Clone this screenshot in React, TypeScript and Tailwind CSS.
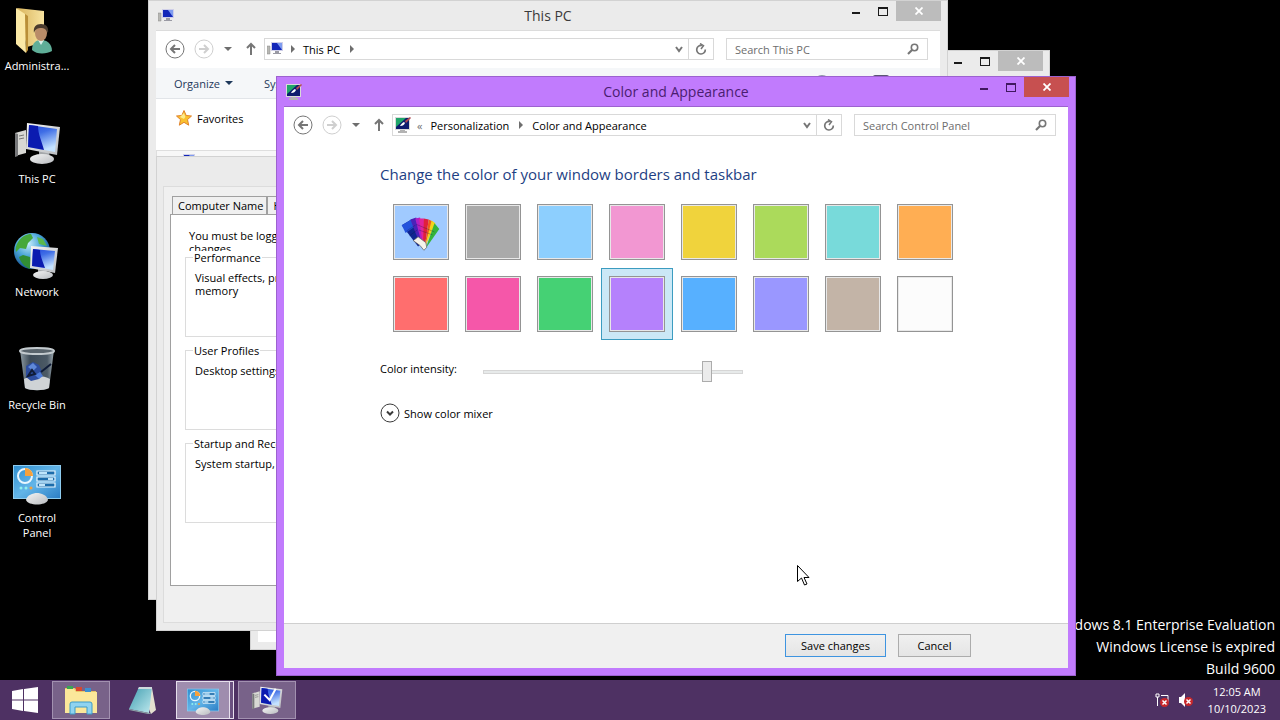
import { useState, type ReactNode } from "react";
import clsx from "clsx";

// Gradients shared by all of the icons
const IconDefs = () => (
    <svg width="0" height="0" className="absolute" aria-hidden="true">
        <defs>
            <linearGradient id="screen" x1="0" y1="0" x2="0.4" y2="1">
                <stop offset="0" stopColor="#2448dc"/>
                <stop offset="0.4" stopColor="#3f6ee6"/>
                <stop offset="1" stopColor="#c4e2ff"/>
            </linearGradient>
            <linearGradient id="bezel" x1="0" y1="0" x2="1" y2="1">
                <stop offset="0" stopColor="#f4f4f4"/>
                <stop offset="1" stopColor="#b9bcc0"/>
            </linearGradient>
            <linearGradient id="folder" x1="0" y1="0" x2="1" y2="0">
                <stop offset="0" stopColor="#d9b45c"/>
                <stop offset="1" stopColor="#f7e3a0"/>
            </linearGradient>
            <linearGradient id="panel" x1="0" y1="0" x2="1" y2="1">
                <stop offset="0" stopColor="#2f8fd0"/>
                <stop offset="0.5" stopColor="#63b5e8"/>
                <stop offset="1" stopColor="#2d7fc6"/>
            </linearGradient>
            <radialGradient id="globe" cx="0.4" cy="0.3" r="0.7">
                <stop offset="0" stopColor="#c5ecfb"/>
                <stop offset="0.5" stopColor="#4aa5d8"/>
                <stop offset="1" stopColor="#14508f"/>
            </radialGradient>
            <linearGradient id="glass" x1="0" y1="0" x2="1" y2="0">
                <stop offset="0" stopColor="#8d9aa2"/>
                <stop offset="0.3" stopColor="#3d4b57"/>
                <stop offset="0.8" stopColor="#4c5a66"/>
                <stop offset="1" stopColor="#9ba7ae"/>
            </linearGradient>
            <linearGradient id="teal" x1="0" y1="0" x2="1" y2="1">
                <stop offset="0" stopColor="#3f9db0"/>
                <stop offset="1" stopColor="#bfe9ee"/>
            </linearGradient>
        </defs>
    </svg>
)

const AdminIcon = () => (
    <svg viewBox="0 0 48 48" className="size-12">
        <path d="M4 2l27 3v31l-17 5z" fill="url(#folder)"/>
        <path d="M3 2l9 6 1 39L3 38z" fill="#fbe9a6"/>
        <path d="M12 8l3 2v34l-2 3z" fill="#b98f38"/>
        <path d="M19 44c0-7 4-10 9-10s11 3 11 11c-5 3-15 4-20-1z" fill="#5fae98"/>
        <path d="M25 34l3 5 3-5z" fill="#d9efe9"/>
        <ellipse cx="28" cy="27" rx="6" ry="8" fill="#b98c68"/>
        <path d="M21 27c-1-6 2-9 7-9 5 0 8 3 7 9-2-4-4-5-7-5s-6 1-7 5z" fill="#4a3b2e"/>
    </svg>
)

const PcIcon = ({ check }: { check?: boolean }) => (
    <svg viewBox="0 0 48 48" className={check ? "size-8" : "size-12"}>
        <path d="M2 14l11-3v23L2 37z" fill="#d8d8d4"/>
        <path d="M2 14l3 1v22l-3 1z" fill="#77787a"/>
        <path d="M6 17l5-1M6 20l5-1" stroke="#777" strokeWidth="1"/>
        <path d="M26 32h10l1 8H26z" fill="#a5a8ab"/>
        <ellipse cx="29" cy="40" rx="12" ry="5" fill="url(#bezel)"/>
        <path d="M14 4l33 4-3 28-31-6z" fill="url(#bezel)"/>
        <path d="M16 6l28 4-2 23-27-5z" fill="url(#screen)"/>
        <path d="M16 6l9 1c0 8 4 16 6 24l-16-3z" fill="#0b1bb0"/>
        {check && <path d="M20 16l8 8L37 7" stroke="#fff" strokeWidth="3" fill="none"/>}
    </svg>
)

const NetworkIcon = () => (
    <svg viewBox="0 0 48 48" className="size-12">
        <circle cx="19" cy="19" r="18" fill="url(#globe)"/>
        <path d="M5 10c4-6 9-8 13-8l2 4-5 5-2 6-6-1-4 4c-1-3 0-7 2-10z" fill="#46a83a"/>
        <path d="M10 23l7 2 3 5-3 7c-6-2-10-8-11-12z" fill="#318e35"/>
        <path d="M24 5l6 2 4 7-8-2z" fill="#5ab84c"/>
        <path d="M25 36h8l1 6h-9z" fill="#a5a8ab"/>
        <ellipse cx="30" cy="43" rx="10" ry="4" fill="url(#bezel)"/>
        <path d="M18 14l27 2-3 25-25-5z" fill="url(#bezel)"/>
        <path d="M20 17l22 2-2 19-21-4z" fill="url(#screen)"/>
        <path d="M20 17l7 1c0 6 3 12 5 18l-13-2z" fill="#0b1bb0"/>
    </svg>
)

const BinIcon = () => (
    <svg viewBox="0 0 48 48" className="size-12">
        <path d="M7 5h34l-5 38c-5 3-19 3-24 0z" fill="url(#glass)"/>
        <path d="M11 34c6-4 20-4 26 0l-1 9c-5 3-19 3-24 0z" fill="#cfd3d6"/>
        <path d="M13 21l7-4 6 3 3 7-3 7-8 2-5-4z" fill="#2d4d9e"/>
        <path d="M15 22l5-4 4 4-4 4z" fill="#5f88d8"/>
        <path d="M22 30l5-3 3 4-4 3z" fill="#4d7ad8"/>
        <path d="M15 31l4-6 3 4zM28 27l10-8" stroke="#101c38" strokeWidth="2" fill="none"/>
        <ellipse cx="24" cy="6" rx="17" ry="3" fill="#59646c" stroke="#c3cace" strokeWidth="2"/>
    </svg>
)

const ControlPanelIcon = ({ small }: { small?: boolean }) => (
    <svg viewBox="0 0 48 48" className={small ? "size-8" : "size-12"}>
        <path d="M0 7h48v34H0z" fill="#8ecbee"/>
        <path d="M1 8h46v32H1z" fill="url(#panel)"/>
        <circle cx="12" cy="18" r="7" fill="none" stroke="#e8f6ff" strokeWidth="2"/>
        <path d="M12 18v-8a8 8 0 0 1 8 8z" fill="#f5a13c"/>
        <path d="M24 13h18v4H24zM24 19h18v4H24zM24 25h18v4H24z" fill="#1c6cab" stroke="#eaf7ff" strokeWidth="1.2"/>
        <path d="M26 15h8M35 21h5M26 27h6" stroke="#bfe5fb" strokeWidth="2"/>
        <circle cx="8" cy="30" r="1.5" fill="#8ff0ee"/>
        <circle cx="13" cy="30" r="1.5" fill="#8ff0ee"/>
        <circle cx="18" cy="30" r="1.5" fill="#f5a13c"/>
        <path d="M13 42c1-5 7-7 11-7s10 2 11 7c-2 6-20 6-22 0z" fill="url(#bezel)"/>
    </svg>
)

const SmallPcIcon = () => (
    <svg viewBox="0 0 16 16" className="size-4 shrink-0">
        <path d="M0 5h3v8H0z" fill="#b8b8b4" stroke="#8a8a8a" strokeWidth="0.5"/>
        <path d="M4 1h12v9H4z" fill="#cfcfe8"/>
        <path d="M5 2h10v7H5z" fill="#1226b8"/>
        <path d="M10 2h5v7z" fill="#7f9cf0"/>
        <path d="M8 10h4v2h2v1H6v-1h2z" fill="#9a9aa4"/>
    </svg>
)

const PersonalizeIcon = () => (
    <svg viewBox="0 0 16 16" className="size-4 shrink-0">
        <path d="M0 0h15v13H0z" fill="#d9d9d9"/>
        <path d="M1 1h13v11H1z" fill="#0d1a6e"/>
        <path d="M1 1h10L1 10z" fill="#1fa56a"/>
        <path d="M5 9c1-2 2-3 4-4l1 1c-1 2-2 3-5 3z" fill="#fff"/>
        <path d="M10 4l5-4 1 1-5 5z" fill="#b04a52"/>
        <path d="M5 13h5v1h2v2H3v-2h2z" fill="#b3b3b3"/>
    </svg>
)

const FanIcon = () => (
    <svg viewBox="0 0 54 54" className="size-full">
        <path d="M7 20l10-6 13 22-6 6z" fill="#0f2590"/>
        <path d="M7 20l10-6 4 7-10 7z" fill="#2352dc"/>
        <path d="M16 14l6-2 9 26-5 2z" fill="#4a22b8"/>
        <path d="M21 13l5-1 5 27-3 1z" fill="#b01fc4"/>
        <path d="M25 13l5 0 1 28-2 0z" fill="#e0239a"/>
        <path d="M30 13l5 1-4 28h-2z" fill="#e0203c"/>
        <path d="M35 14l4 2-8 26z" fill="#f05a1c"/>
        <path d="M38 15l4 3-11 25z" fill="#f2d21c"/>
        <path d="M41 18l5 6-14 20z" fill="#35b53a"/>
        <path d="M19 36l5-4 8 6 1 5-3 3-4-5z" fill="#f6f3ea" stroke="#555" strokeWidth="0.7"/>
        <path d="M12 26l9-6M15 31l8-6M22 19l19 8M25 25l14 5" stroke="#10103c" strokeOpacity="0.3"/>
    </svg>
)

const ExplorerIcon = () => (
    <svg viewBox="0 0 36 32" className="h-8 w-9">
        <path d="M2 4h10l2 3h19v21H2z" fill="#e9c766"/>
        <path d="M4 2h6v5H4z" fill="#3aa655"/>
        <path d="M13 3h6v4h-6z" fill="#d8472f"/>
        <path d="M22 4h6v4h-6z" fill="#3c8fd0"/>
        <path d="M2 5h9l2 3h21v21H2z" fill="#fbe79a"/>
        <path d="M7 30V20q0-2 2-2h18q2 0 2 2v10h-5v-7H12v7z" fill="#8fd3f0" stroke="#3d9bc9"/>
    </svg>
)

const NotepadIcon = () => (
    <svg viewBox="0 0 36 32" className="h-8 w-9">
        <path d="M27 4l4 22-5 4L16 6z" fill="#e4e0cf"/>
        <path d="M14 3h13l-3 26-20-4z" fill="url(#teal)"/>
        <path d="M14 3h13v2H13z" fill="#cfd9dc"/>
        <path d="M4 25l20 4 3 1h-4L4 26z" fill="#8fa3a8"/>
    </svg>
)

const Arrow = ({ forward }: { forward?: boolean }) => (
    <svg viewBox="0 0 20 20" className="size-5" fill="none" stroke={forward ? "#cfcfcf" : "#767676"}>
        <circle cx="10" cy="10" r="9"/>
        <path d={forward ? "M5 10h9M10 6l4 4-4 4" : "M15 10H6M10 6l-4 4 4 4"} strokeWidth="2"/>
    </svg>
)

const Crumb = () => (
    <svg viewBox="0 0 4 8" className="h-2 w-1 shrink-0"><path d="M0 0l4 4-4 4z" fill="#6e6e6e"/></svg>
)

const Caret = ({ color }: { color: string }) => (
    <svg viewBox="0 0 8 4" className="h-1 w-2 shrink-0"><path d="M0 0h8L4 4z" fill={color}/></svg>
)

type WindowProps = {
    title?: string
    icon?: ReactNode
    active?: boolean
    buttons?: boolean
    className: string
    children?: ReactNode
}

const Window = ({ title, icon, active, buttons = true, className, children }: WindowProps) => (
    <section
        className={clsx(
            "absolute flex flex-col border px-[7px] pb-[7px]",
            active ? "border-[#9c62cf] bg-[#c17bfd]" : "border-[#d2d2d2] bg-[#ebebeb]",
            className,
        )}
    >
        <header className="grid h-[29px] shrink-0 grid-cols-[1fr_auto_1fr] items-center">
            <span className="pl-[2px]">{icon}</span>
            <h2 className={clsx("text-[14px]", active ? "text-[#4a1d70]" : "text-[#3a3a3a]")}>{title}</h2>
            {buttons && (
                <div className="-mr-px flex self-start justify-self-end">
                    <button aria-label="Minimize" className="flex h-5 w-[27px] items-center justify-center">
                        <span className={clsx("mt-1 h-[2px] w-2", active ? "bg-[#40185f]" : "bg-[#1a1a1a]")}/>
                    </button>
                    <button aria-label="Maximize" className="flex h-5 w-[27px] items-center justify-center">
                        <span className={clsx("h-[9px] w-[10px] border border-t-2", active ? "border-[#40185f]" : "border-[#1a1a1a]")}/>
                    </button>
                    <button
                        aria-label="Close"
                        className={clsx("flex h-5 w-[45px] items-center justify-center", active ? "bg-[#c75050]" : "bg-[#bcbcbc]")}
                    >
                        <svg viewBox="0 0 8 8" className="size-2" stroke="#fff" strokeWidth="1.8"><path d="M0.5 0.5l7 7M7.5 0.5l-7 7"/></svg>
                    </button>
                </div>
            )}
        </header>
        <div
            className={clsx(
                "flex min-h-0 flex-1 flex-col overflow-hidden border-t",
                active ? "border-[#9c62cf] bg-white" : "border-[#dcdcdc]",
                !active && (buttons ? "bg-white" : "-ml-px border-b border-l bg-[#f0f0f0]"),
            )}
        >
            {children}
        </div>
    </section>
)

const NavBar = ({ search, children }: { search: string, children: ReactNode }) => (
    <nav className="flex h-[37px] shrink-0 items-center pr-3 pb-px pl-[9px]">
        <button aria-label="Back"><Arrow/></button>
        <button aria-label="Forward" className="ml-[9px]"><Arrow forward/></button>
        <button aria-label="Recent locations" className="ml-[10px]"><Caret color="#6e6e6e"/></button>
        <button aria-label="Up" className="ml-3">
            <svg viewBox="0 0 14 14" className="size-[14px]" fill="none" stroke="#767676" strokeWidth="2">
                <path d="M7 13V2M3 6l4-4 4 4"/>
            </svg>
        </button>
        <div className="ml-[6px] flex h-[22px] flex-1 items-center border border-[#d9d9d9] pl-[2px]">
            {children}
            <button aria-label="Previous locations" className="ml-auto pr-1">
                <svg viewBox="0 0 10 10" className="size-[10px]" fill="none" stroke="#767676" strokeWidth="2"><path d="M2 3l3 4 3-4"/></svg>
            </button>
            <button aria-label="Refresh" className="flex h-full w-[25px] items-center justify-center border-l border-[#d9d9d9]">
                <svg viewBox="0 0 12 12" className="size-3" fill="none" stroke="#767676" strokeWidth="1.7">
                    <path d="M7 2.500A4.300 4.300 0 1 0 10.300 6.500"/>
                    <path d="M5 0.500l3.500 2.200L6 6" strokeWidth="1.500"/>
                </svg>
            </button>
        </div>
        <label className="ml-3 flex h-[22px] w-[202px] items-center border border-[#d9d9d9] pr-2 pl-2">
            <input type="text" aria-label={search} placeholder={search} className="min-w-0 flex-1 placeholder:text-[#6d6d6d] focus:outline-none"/>
            <svg viewBox="0 0 12 12" className="size-3" fill="none" stroke="#767676" strokeWidth="1.6">
                <circle cx="7.5" cy="4.5" r="3.2"/>
                <path d="M5 7l-4 4" strokeWidth="2.2"/>
            </svg>
        </label>
    </nav>
)

const ThisPcWindow = () => (
    <Window title="This PC" icon={<SmallPcIcon/>} className="top-0 left-[148px] h-[600px] w-[800px]">
        <NavBar search="Search This PC">
            <SmallPcIcon/>
            <span className="mx-2"><Crumb/></span>
            <span className="mr-[10px]">This PC</span>
            <Crumb/>
        </NavBar>
        <div className="flex h-[31px] shrink-0 items-center border-b border-[#e2e5e9] bg-[#f5f7f9] pr-[51px] pl-[18px] text-[#1e395b]">
            <button className="flex items-center gap-[5px]">Organize <Caret color="#1e395b"/></button>
            <button className="ml-[31px]">System properties</button>
            <svg viewBox="0 0 16 16" className="ml-auto size-4"><circle cx="8" cy="8" r="8" fill="#8e93a8"/></svg>
            <svg viewBox="0 0 16 16" className="ml-[43px] size-4"><rect width="16" height="16" rx="2" fill="#5b5575"/></svg>
        </div>
        <div className="flex items-center gap-[5px] pt-[11px] pb-6 pl-5">
            <svg viewBox="0 0 16 16" className="size-4">
                <path d="M8 0.5l2.2 5 5.3 0.5-4 3.6 1.2 5.6L8 12.3l-4.700 2.900 1.200-5.600-4-3.600 5.300-0.500z" fill="#f9c12f" stroke="#e0822a"/>
                <path d="M8 3l1.300 4L8 9 4 7z" fill="#fdeb8c"/>
            </svg>
            Favorites
        </div>
        <div className="flex h-[22px] items-center border border-[#dedede] bg-[#f7f7f7] pl-[22px]"><SmallPcIcon/></div>
    </Window>
)

const groups = [
    { title: "Performance", text: "Visual effects, processor scheduling, memory" },
    { title: "User Profiles", text: "Desktop settings related to your sign-in" },
    { title: "Startup and Recovery", text: "System startup, system failure" },
]

const SystemPropertiesWindow = () => (
    <Window buttons={false} className="top-[156px] left-[156px] h-[475px] w-[430px]">
        <div className="flex flex-1 flex-col px-[6px] pt-[9px] pb-9 leading-[13px]">
            <div className="flex px-[2px]">
                <button className="h-[18px] border border-b-0 border-[#a0a0a0] pr-[3px] pl-[5px]">Computer Name</button>
                <button className="h-[18px] border border-b-0 border-[#a0a0a0] pr-[3px] pl-[5px]">Hardware</button>
            </div>
            <div className="flex-1 border border-[#a0a0a0] bg-white px-[14px] pt-[14px]">
                <p className="h-[22px] w-[300px] overflow-hidden pl-1">
                    You must be logged on to make most of these<br/>changes.
                </p>
                {groups.map(group => (
                    <fieldset key={group.title} className="mb-[7px] h-[86px] border border-[#dcdcdc] px-[9px]">
                        <legend className="-ml-[2px] px-[1px]">{group.title}</legend>
                        <p className="mt-[7px] w-[220px]">{group.text}</p>
                    </fieldset>
                ))}
            </div>
        </div>
    </Window>
)

const swatches = [
    { name: "Automatic", color: "bg-[#a0caff]" },
    { name: "Gray", color: "bg-[#aaaaaa]" },
    { name: "Sky", color: "bg-[#8dcffe]" },
    { name: "Pink", color: "bg-[#f297d2]" },
    { name: "Yellow", color: "bg-[#f0d33c]" },
    { name: "Lime", color: "bg-[#abda5b]" },
    { name: "Turquoise", color: "bg-[#78dada]" },
    { name: "Orange", color: "bg-[#ffae53]" },
    { name: "Red", color: "bg-[#ff6e6e]" },
    { name: "Fuchsia", color: "bg-[#f557a9]" },
    { name: "Green", color: "bg-[#45d174]" },
    { name: "Violet", color: "bg-[#b581fc]" },
    { name: "Blue", color: "bg-[#57b0ff]" },
    { name: "Lavender", color: "bg-[#9a97ff]" },
    { name: "Taupe", color: "bg-[#c3b4a7]" },
    { name: "White", color: "bg-[#fcfcfc]" },
]

const ColorWindow = () => {

    const [selected, setSelected] = useState("Violet")
    const [intensity, setIntensity] = useState(224)

    return (
        <Window active title="Color and Appearance" icon={<PersonalizeIcon/>} className="top-[76px] left-[276px] h-[600px] w-[800px]">
            <NavBar search="Search Control Panel">
                <PersonalizeIcon/>
                <span className="mr-2 ml-[6px] text-[#6e6e6e]">«</span>
                <span className="mr-[10px]">Personalization</span>
                <Crumb/>
                <span className="ml-[9px]">Color and Appearance</span>
            </NavBar>
            <main className="flex-1 px-24 pt-[19px]">
                <h1 className="text-[15px] leading-[22px] text-[#1e3f84]">Change the color of your window borders and taskbar</h1>
                <div className="mt-[11px] grid w-max grid-cols-8 pl-[5px]">
                    {swatches.map(swatch => (
                        <button
                            key={swatch.name}
                            aria-label={swatch.name}
                            aria-pressed={swatch.name === selected}
                            onClick={() => setSelected(swatch.name)}
                            className={clsx(
                                "size-[72px] border p-[7px]",
                                swatch.name === selected ? "border-[#3c9cc0] bg-[#cbe8f6]" : "border-transparent",
                            )}
                        >
                            <span className="block size-full border border-[#949494] bg-[#e8e8e8] p-px">
                                <span className={clsx("block size-full", swatch.color)}>
                                    {swatch.name === "Automatic" && <FanIcon/>}
                                </span>
                            </span>
                        </button>
                    ))}
                </div>
                <div className="mt-[18px] flex h-7 items-center">
                    <label htmlFor="intensity" className="w-[103px] pb-2">Color intensity:</label>
                    <input
                        id="intensity"
                        type="range"
                        min={0}
                        max={255}
                        value={intensity}
                        onChange={e => setIntensity(Number(e.target.value))}
                        className="h-[21px] w-[260px] appearance-none bg-transparent [&::-webkit-slider-runnable-track]:h-1 [&::-webkit-slider-runnable-track]:border [&::-webkit-slider-runnable-track]:border-[#d6d6d6] [&::-webkit-slider-runnable-track]:bg-[#e7eaea] [&::-webkit-slider-thumb]:-mt-[10px] [&::-webkit-slider-thumb]:h-[21px] [&::-webkit-slider-thumb]:w-[10px] [&::-webkit-slider-thumb]:appearance-none [&::-webkit-slider-thumb]:border [&::-webkit-slider-thumb]:border-[#acacac] [&::-webkit-slider-thumb]:bg-[#ebebeb]"
                    />
                </div>
                <button className="mt-[17px] flex items-center gap-1">
                    <svg viewBox="0 0 20 20" className="size-5" fill="none" stroke="#3a3a3a">
                        <circle cx="10" cy="10" r="9"/>
                        <path d="M7 8.5l3 3 3-3" strokeWidth="2"/>
                    </svg>
                    Show color mixer
                </button>
            </main>
            <footer className="flex h-[45px] shrink-0 items-center justify-end gap-3 border-t border-[#cfcfcf] bg-[#f0f0f0] pr-[97px] pb-px">
                <button className="h-[23px] w-[101px] border border-[#3e94e0] bg-linear-to-b from-[#f0f0f0] to-[#e5e5e5]">Save changes</button>
                <button className="h-[23px] w-[73px] border border-[#acacac] bg-linear-to-b from-[#f0f0f0] to-[#e5e5e5]">Cancel</button>
            </footer>
        </Window>
    )
}

const desktopItems = [
    { label: "Administra...", icon: <AdminIcon/> },
    { label: "This PC", icon: <PcIcon/> },
    { label: "Network", icon: <NetworkIcon/> },
    { label: "Recycle Bin", icon: <BinIcon/> },
    { label: "Control Panel", icon: <ControlPanelIcon/> },
]

const Taskbar = () => (
    <footer className="flex h-10 shrink-0 items-stretch bg-[#4e3163] py-px text-white">
        <button aria-label="Start" className="flex w-[50px] items-center justify-center">
            <svg viewBox="0 0 26 26" className="size-[26px]" fill="#fff">
                <path d="M0 4l11-2v10.500H0zM12 2l14-2v12.500H12zM0 13.500h11V24L0 22zM12 13.500h14V26l-14-2z"/>
            </svg>
        </button>
        <div className="ml-[2px] flex gap-1">
            <button aria-label="File Explorer" className="flex w-[58px] items-center justify-center border border-[#a291b0] bg-[#786289]"><ExplorerIcon/></button>
            <button aria-label="Notepad" className="flex w-[58px] items-center justify-center"><NotepadIcon/></button>
            <span className="flex w-[58px]">
                <button aria-label="Control Panel" className="flex flex-1 items-center justify-center border border-[#e6dfec] bg-[#9f8dae]"><ControlPanelIcon small/></button>
                <span className="w-1 border-y border-r border-[#e6dfec] bg-[#6a5080]"/>
            </span>
            <button aria-label="System Properties" className="flex w-[58px] items-center justify-center border border-[#a291b0] bg-[#786289]"><PcIcon check/></button>
        </div>
        <div className="ml-auto flex items-center pr-[14px]">
            <svg viewBox="0 0 16 16" className="size-4" fill="none" stroke="#fff">
                <path d="M2 2h3v3H2zM3.500 5v9M7 3.500h7v7"/>
                <circle cx="10.500" cy="10.500" r="4.500" fill="#c8282c" stroke="none"/>
                <path d="M8.500 8.500l4 4M12.500 8.500l-4 4" strokeWidth="1.500"/>
            </svg>
            <svg viewBox="0 0 16 16" className="ml-2 size-4">
                <path d="M1 5h2l4-4v14l-4-4H1z" fill="#fff"/>
                <circle cx="10.500" cy="9.500" r="4.500" fill="#c8282c"/>
                <path d="M8.500 7.500l4 4M12.500 7.500l-4 4" stroke="#fff" strokeWidth="1.500"/>
            </svg>
            <div className="ml-[14px] text-center leading-[17px]">
                <p>12:05 AM</p>
                <p>10/10/2023</p>
            </div>
        </div>
    </footer>
)

export default function App() {
    return (
        <div className="flex h-screen flex-col overflow-hidden bg-black font-['Open_Sans','Noto_Sans',sans-serif] text-[11px] leading-[15px] text-black">
            <IconDefs/>
            <div className="relative flex flex-1 justify-between">
                <ul className="w-[74px] pt-[6px] text-white">
                    {desktopItems.map(item => (
                        <li key={item.label} className="flex h-[113px] flex-col items-center gap-1 text-center">
                            {item.icon}
                            <span className={clsx("w-[72px]", item.label === "Control Panel" && "px-3")}>{item.label}</span>
                        </li>
                    ))}
                </ul>
                <div className="self-end pr-[5px] text-right text-[14px] leading-[22px] text-white">
                    <p>Windows 8.1 Enterprise Evaluation</p>
                    <p>Windows License is expired</p>
                    <p>Build 9600</p>
                </div>

                <Window className="top-[50px] left-[250px] h-[600px] w-[800px]"/>
                <ThisPcWindow/>
                <SystemPropertiesWindow/>
                <ColorWindow/>

                <svg viewBox="0 0 14 22" className="absolute top-[565px] left-[797px] h-[22px] w-[14px]">
                    <path d="M0.500 0.500v16l4-3.500 3 7 2.500-1-3-6.500h5z" fill="#fff" stroke="#000"/>
                </svg>
            </div>
            <Taskbar/>
        </div>
    )
}
